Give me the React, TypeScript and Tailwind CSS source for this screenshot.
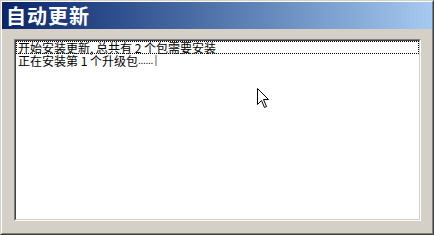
import React from "react";

export default function App() {
  return (
    <div className="w-[434px] h-[235px] bg-[#d4d0c8] border border-t-[#d4d0c8] border-l-[#d4d0c8] border-r-[#404040] border-b-[#404040] relative overflow-hidden">
      <div className="w-full h-full border border-t-white border-l-white border-r-[#808080] border-b-[#808080] flex flex-col">
        <div className="h-[27px] shrink-0 bg-gradient-to-r from-[#0a246a] to-[#a6caf0] flex items-center pl-[4px]">
          <span
            className="text-white font-bold text-[20px] leading-none tracking-[1px]"
            style={{ fontFamily: '"Noto Sans CJK SC", sans-serif' }}
          >
            自动更新
          </span>
        </div>
        <div className="flex-1 pt-[10px] pl-[12px] pr-[11px] pb-[12px] flex">
          <div className="flex-1 border border-t-[#808080] border-l-[#808080] border-r-white border-b-white">
            <div className="w-full h-full border border-t-[#404040] border-l-[#404040] border-r-[#d4d0c8] border-b-[#d4d0c8] bg-white">
              <div
                className="text-[12px] leading-[12px] text-black"
                style={{ fontFamily: '"Noto Sans CJK SC", sans-serif' }}
              >
                <div className="h-[13px] border border-dotted border-black pl-[1px] flex items-center whitespace-pre">
                  开始安装更新, 总共有 2 个包需要安装
                </div>
                <div className="h-[13px] pl-[2px] flex items-center whitespace-pre">
                  正在安装第 1 个升级包
                  <span className="text-[10px] tracking-[-0.3px]" style={{ fontFamily: '"Liberation Sans", sans-serif' }}>......</span>
                  <span className="inline-block w-[2px] h-[11px] bg-[#b0b0b0] ml-[2px]" />
                </div>
              </div>
            </div>
          </div>
        </div>
      </div>
      <svg
        className="absolute left-[256px] top-[87px]"
        width="13"
        height="21"
        viewBox="0 0 13 21"
      >
        <path
          d="M0.5 0.5 L0.5 16.5 L4.5 12.5 L7.5 19.5 L9.5 18.5 L6.5 11.5 L11.5 11.5 Z"
          fill="white"
          stroke="black"
          strokeWidth="1"
        />
      </svg>
    </div>
  );
}
